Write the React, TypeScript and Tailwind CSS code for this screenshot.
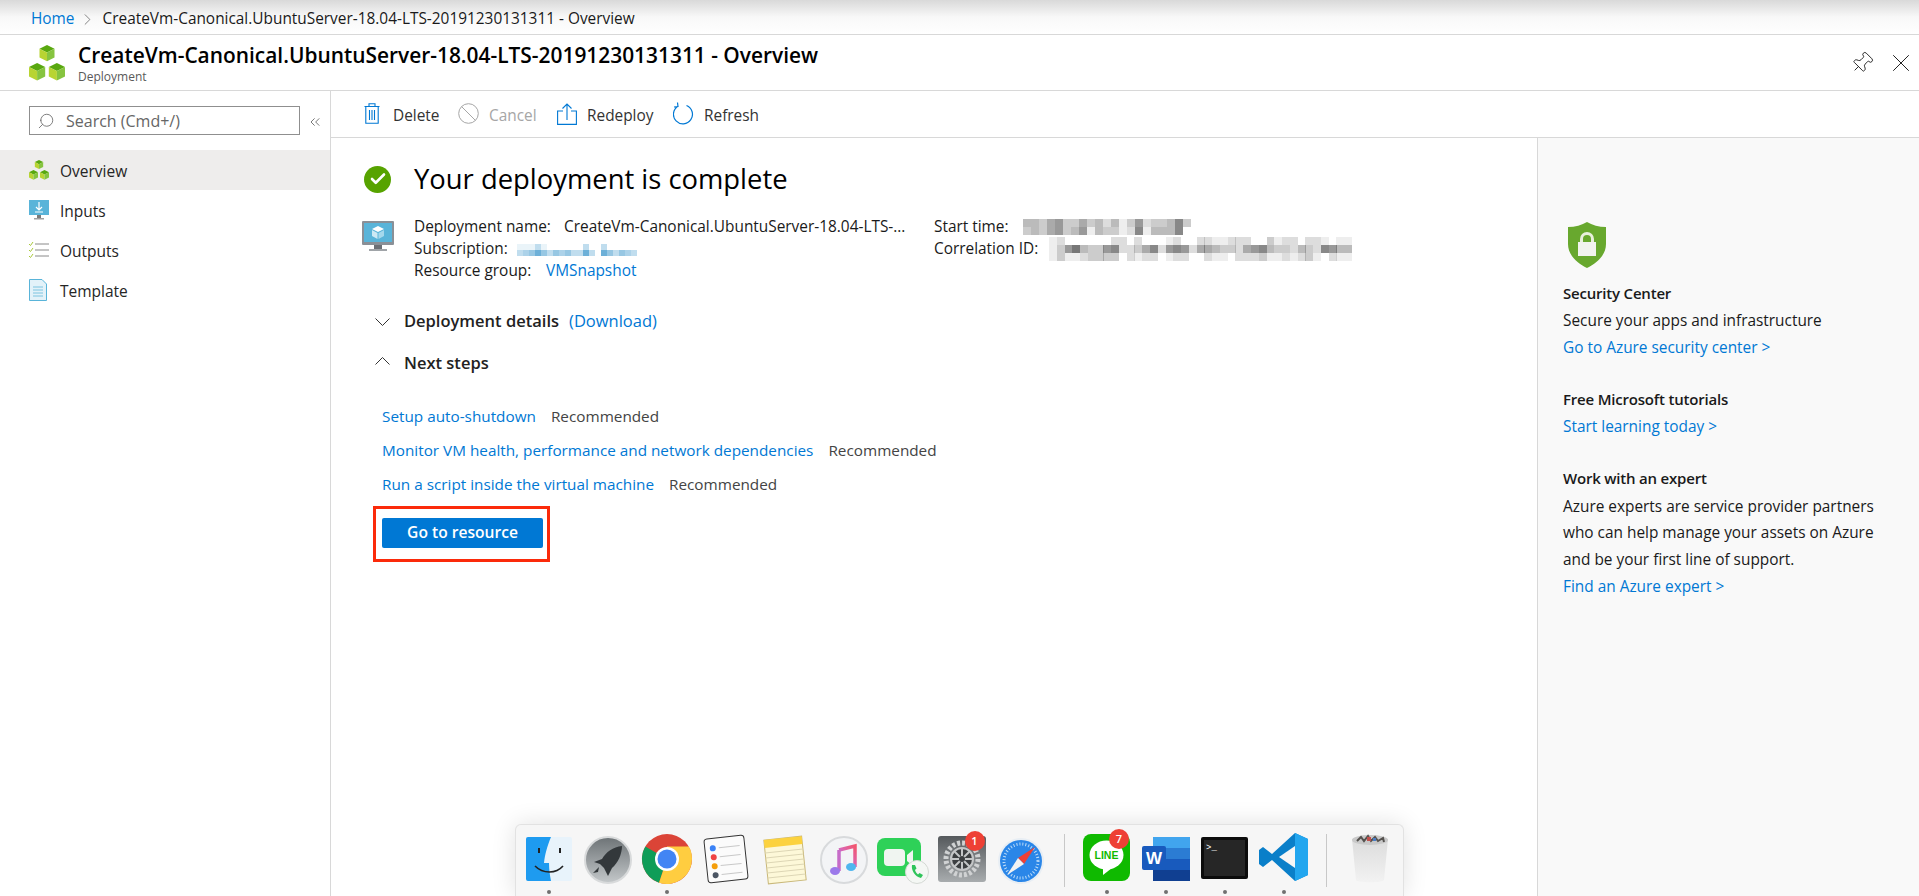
import { Search, ChevronRight, ChevronsLeft, X, Pin, Check } from "lucide-react";

const blue = "text-[#0078d4]";

// one green cube of the deployment icon
const Cube = ({ x, y, s }: { x: number; y: number; s: number }) => (
  <g transform={`translate(${x} ${y}) scale(${s})`}>
    <polygon points="0,3 6,0 12,3 6,6" fill="#59a80f" />
    <polygon points="0,3 6,6 6,13 0,10" fill="#b8d432" />
    <polygon points="12,3 6,6 6,13 12,10" fill="#86c440" />
  </g>
);

const Cubes = ({ className }: { className: string }) => (
  <svg viewBox="0 0 36 36" className={className}>
    <Cube x={10.5} y={0} s={1.25} />
    <Cube x={0} y={18} s={1.35} />
    <Cube x={19.8} y={18} s={1.35} />
  </svg>
);

const Monitor = ({ className }: { className: string }) => (
  <svg viewBox="0 0 32 30" className={className}>
    <rect x="0" y="0" width="32" height="24" rx="1" fill="#8a9097" />
    <rect x="2" y="2" width="28" height="19" fill="#59b4d9" />
    <rect x="12" y="24" width="8" height="4" fill="#6b7076" />
    <rect x="7" y="28" width="18" height="2" fill="#a0a4a8" />
    <polygon points="16,5 22,8 16,11 10,8" fill="#ffffff" />
    <polygon points="10,9 15.5,12 15.5,18 10,15" fill="#cde9f4" />
    <polygon points="22,9 16.5,12 16.5,18 22,15" fill="#a5d8ec" />
  </svg>
);

// pixelated (censored) values in the summary
const Blur = ({ rows, rgb, className }: { rows: number[][]; rgb: string; className: string }) => (
  <svg viewBox={`0 0 ${rows[0].length} ${rows.length}`} shapeRendering="crispEdges" className={className}>
    {rows.map((row, y) =>
      row.map((v, x) => <rect key={x} x={x} y={y} width="1.02" height="1.02" fill={rgb} opacity={v / 10} />)
    )}
  </svg>
);

const startRows = [
  [4, 4, 3, 5, 6, 3, 3, 5, 3, 4, 2, 4, 1, 3, 6, 2, 3, 3, 4, 7, 3],
  [3, 4, 3, 5, 6, 3, 4, 6, 1, 4, 3, 3, 1, 2, 7, 1, 4, 4, 4, 7, 0],
];
const corrRows = [
  [1, 2, 0, 0, 0, 0, 0, 0, 2, 2, 0, 2, 0, 0, 0, 1, 2, 0, 0, 2, 2, 1, 1, 2, 2, 2, 0, 0, 3, 1, 2, 2, 0, 2, 2, 1, 0, 1, 1],
  [1, 3, 6, 8, 4, 3, 3, 6, 7, 2, 2, 3, 5, 7, 2, 6, 7, 6, 2, 5, 5, 4, 3, 3, 2, 5, 6, 7, 4, 3, 3, 2, 4, 3, 2, 7, 6, 4, 4],
  [1, 3, 1, 1, 2, 3, 3, 3, 3, 0, 2, 1, 2, 2, 0, 1, 2, 2, 0, 0, 2, 1, 1, 0, 2, 2, 2, 3, 1, 1, 2, 1, 2, 3, 1, 0, 2, 1, 1],
];
const subRows = [
  [1, 1, 1, 3, 1, 0, 0, 0, 0, 0, 0, 3, 0, 0, 3, 0, 0, 0, 0, 0],
  [3, 4, 5, 7, 5, 3, 5, 4, 5, 3, 3, 7, 3, 0, 7, 5, 3, 5, 4, 3],
];

const Dot = () => <span className="absolute bottom-[2px] left-1/2 -ml-[2px] h-[4px] w-[4px] rounded-full bg-[#707070]" />;

const Badge = ({ n }: { n: number }) => (
  <span className="absolute -top-[5px] right-[1px] flex h-[20px] w-[20px] items-center justify-center rounded-full bg-[#ee4035] text-[11px] font-semibold text-white">
    {n}
  </span>
);

const DockItem = ({ dot, children }: { dot?: boolean; children: React.ReactNode }) => (
  <div className="relative flex h-full w-[59px] items-start justify-center pt-[9px]">
    {children}
    {dot && <Dot />}
  </div>
);

const Dock = () => (
  <div className="absolute bottom-0 left-[515px] flex h-[72px] w-[889px] rounded-t-[6px] border border-b-0 border-[#e2e2e2] bg-[#f6f6f6] pl-[3px] shadow-[0_0_24px_rgba(0,0,0,0.12)]">
    <DockItem dot>
      <svg viewBox="0 0 46 44" className="mt-[3px] h-[44px] w-[46px]">
        <rect width="46" height="44" rx="2" fill="#e8f3fb" />
        <path d="M2 0H25C21 10 19 17 18 26H23C23 33 24 39 25 44H2a2 2 0 0 1-2-2V2a2 2 0 0 1 2-2Z" fill="#1e9bf0" />
        <rect x="12" y="11" width="2" height="5" fill="#222" />
        <rect x="33" y="11" width="2" height="5" fill="#222" />
        <path d="M9 29C17 37 30 37 37 29" fill="none" stroke="#222" strokeWidth="1.6" />
      </svg>
    </DockItem>
    <DockItem>
      <svg viewBox="0 0 48 48" className="mt-[2px] h-[48px] w-[48px]">
        <defs>
          <linearGradient id="rocketBg" x1="0" y1="0" x2="0" y2="1">
            <stop offset="0" stopColor="#6d7376" />
            <stop offset="1" stopColor="#c4c8ca" />
          </linearGradient>
        </defs>
        <circle cx="24" cy="24" r="23" fill="url(#rocketBg)" stroke="#d8dadb" strokeWidth="2" />
        <path d="M38 10C29 11 22 16 18 23L10 26L16 28L20 32L24 40L28 32C34 27 38 18 38 10Z" fill="#33383b" />
        <path d="M15 31L9 37L14 36Z" fill="#33383b" />
      </svg>
    </DockItem>
    <DockItem dot>
      <svg viewBox="0 0 52 52" className="-mt-[1px] h-[52px] w-[52px]">
        <circle cx="26" cy="26" r="25" fill="#db4437" />
        <path d="M26 26L4.3 13.5A25 25 0 0 0 18 49.7Z" fill="#0f9d58" />
        <path d="M26 26L18 49.7A25 25 0 0 0 51 26C51 21 50 17 47.7 13.5H26Z" fill="#ffcd40" />
        <circle cx="26" cy="26" r="12" fill="#ffffff" />
        <circle cx="26" cy="26" r="9.5" fill="#4285f4" />
      </svg>
    </DockItem>
    <DockItem>
      <svg viewBox="0 0 46 50" className="h-[50px] w-[46px]">
        <g transform="rotate(-6 23 25)">
          <rect x="3" y="3" width="40" height="44" rx="3" fill="#fbfbfb" stroke="#333" strokeWidth="1" />
          <circle cx="11" cy="13" r="3" fill="#3b82f6" />
          <circle cx="11" cy="22" r="3" fill="#ef4444" />
          <circle cx="11" cy="31" r="3" fill="#f59e0b" />
          <circle cx="11" cy="40" r="3" fill="#4b5563" />
          <path d="M17 13H38M17 22H38M17 31H38M17 40H38" stroke="#c8c8c8" strokeWidth="1" />
        </g>
      </svg>
    </DockItem>
    <DockItem>
      <svg viewBox="0 0 46 52" className="h-[52px] w-[46px]">
        <g transform="rotate(-6 23 26)">
          <rect x="4" y="4" width="38" height="44" fill="#fdf8d8" stroke="#c9b87a" strokeWidth="1" />
          <rect x="4" y="4" width="38" height="8" fill="#fcd23e" />
          <path d="M4 17H42M4 22H42M4 27H42M4 32H42M4 37H42M4 42H42" stroke="#ddd6b5" strokeWidth="1" />
        </g>
      </svg>
    </DockItem>
    <DockItem>
      <svg viewBox="0 0 48 48" className="mt-[2px] h-[48px] w-[48px]">
        <defs>
          <linearGradient id="noteGrad" x1="0" y1="1" x2="1" y2="0">
            <stop offset="0" stopColor="#8f7cf0" />
            <stop offset="0.5" stopColor="#d966b5" />
            <stop offset="1" stopColor="#f2566f" />
          </linearGradient>
        </defs>
        <circle cx="24" cy="24" r="23" fill="#f3f4f6" stroke="#d8dadc" strokeWidth="2" />
        <path d="M19 14L35 10V31" fill="none" stroke="url(#noteGrad)" strokeWidth="3.5" />
        <path d="M19 14V35" stroke="#c66bc8" strokeWidth="3.5" />
        <ellipse cx="15" cy="35" rx="5" ry="4" fill="#9b79ea" />
        <ellipse cx="31" cy="31" rx="5" ry="4" fill="#4fb6ee" />
      </svg>
    </DockItem>
    <DockItem>
      <svg viewBox="0 0 52 46" className="mt-[4px] h-[46px] w-[52px]">
        <rect x="0" y="0" width="44" height="38" rx="8" fill="#2ed158" />
        <rect x="7" y="11" width="21" height="17" rx="4" fill="#f0f5f1" />
        <path d="M30 17L36 12V28L30 23Z" fill="#f0f5f1" />
        <circle cx="40" cy="34" r="11.5" fill="#f4f7f4" stroke="#d4d8d4" strokeWidth="1" />
        <path d="M35 27C34 32 38 39 44 40L46 37L42.500 35L41 36.500C39.500 35.500 38.500 33.500 38 32L39.500 30.500L38 27Z" fill="#2ec45a" />
      </svg>
    </DockItem>
    <DockItem>
      <div className="relative mt-[2px]">
        <svg viewBox="0 0 48 46" className="h-[46px] w-[48px]">
          <defs>
            <linearGradient id="gearBg" x1="0" y1="0" x2="0" y2="1">
              <stop offset="0" stopColor="#55595c" />
              <stop offset="1" stopColor="#a8acae" />
            </linearGradient>
          </defs>
          <rect width="48" height="46" rx="3" fill="url(#gearBg)" />
          <circle cx="24" cy="23" r="16" fill="none" stroke="#d0d2d3" strokeWidth="5" strokeDasharray="3 2" />
          <circle cx="24" cy="23" r="11" fill="#3c3f41" stroke="#c4c6c7" strokeWidth="2" />
          <path d="M24 12V34M13 23H35M16 15L32 31M32 15L16 31" stroke="#c4c6c7" strokeWidth="2" />
          <circle cx="24" cy="23" r="3" fill="#3c3f41" />
        </svg>
        <Badge n={1} />
      </div>
    </DockItem>
    <DockItem>
      <svg viewBox="0 0 48 48" className="mt-[3px] h-[48px] w-[48px]">
        <circle cx="24" cy="24" r="23" fill="#e8eef4" />
        <circle cx="24" cy="24" r="21" fill="#2a86e8" />
        <circle cx="24" cy="24" r="17" fill="none" stroke="#bcdcf8" strokeWidth="3" strokeDasharray="1 2" />
        <polygon points="38,10 21,21 27,27" fill="#ee4035" />
        <polygon points="10,38 21,21 27,27" fill="#f2f2f2" />
      </svg>
    </DockItem>
    <div className="ml-[14px] mr-[12px] mt-[9px] h-[53px] w-px bg-[#c8c8c8]" />
    <DockItem dot>
      <div className="relative">
        <svg viewBox="0 0 47 47" className="h-[47px] w-[47px]">
          <rect width="47" height="47" rx="8" fill="#0fba00" />
          <ellipse cx="23.500" cy="21" rx="17" ry="14.500" fill="#ffffff" />
          <path d="M20 34L20 41L29 34Z" fill="#ffffff" />
          <text x="23.500" y="25" textAnchor="middle" fontSize="10.500" fontWeight="700" fill="#0fba00" fontFamily="'Liberation Sans', sans-serif">LINE</text>
        </svg>
        <Badge n={7} />
      </div>
    </DockItem>
    <DockItem dot>
      <svg viewBox="0 0 48 44" className="mt-[3px] h-[44px] w-[48px]">
        <rect x="11" y="0" width="37" height="44" rx="2" fill="#2b7cd3" />
        <rect x="11" y="0" width="37" height="11" fill="#41a5ee" />
        <rect x="11" y="22" width="37" height="11" fill="#185abd" />
        <rect x="11" y="33" width="37" height="11" fill="#103f91" />
        <rect x="0" y="9" width="24" height="24" rx="2" fill="#185abd" />
        <text x="12" y="27" textAnchor="middle" fontSize="17" fontWeight="700" fill="#ffffff" fontFamily="'Liberation Sans', sans-serif">W</text>
      </svg>
    </DockItem>
    <DockItem dot>
      <svg viewBox="0 0 47 42" className="mt-[3px] h-[42px] w-[47px]">
        <rect width="47" height="42" rx="2" fill="#0c0c0c" />
        <rect x="3" y="3" width="41" height="36" fill="#262626" />
        <text x="5" y="13" fontSize="9" fill="#ffffff" fontFamily="'Liberation Mono', monospace">&gt;_</text>
      </svg>
    </DockItem>
    <DockItem dot>
      <svg viewBox="0 0 49 48" className="mt-[-1px] h-[48px] w-[49px]">
        <path d="M36 0L49 6V42L36 48L13 27L4 34L0 31V17L4 14L13 21Z" fill="#0a7fc9" />
        <path d="M36 0L49 6V42L36 48Z" fill="#22a6ef" />
        <path d="M36 13L20 24L36 35Z" fill="#f6f6f6" />
      </svg>
    </DockItem>
    <div className="ml-[13px] mr-[13px] mt-[9px] h-[53px] w-px bg-[#c8c8c8]" />
    <DockItem>
      <svg viewBox="0 0 38 50" className="h-[50px] w-[38px]">
        <defs>
          <linearGradient id="binGrad" x1="0" y1="0" x2="0" y2="1">
            <stop offset="0" stopColor="#dcdcdc" />
            <stop offset="1" stopColor="#f2f2f2" />
          </linearGradient>
        </defs>
        <path d="M1 5L5 46C5 49 33 49 33 46L37 5Z" fill="url(#binGrad)" />
        <ellipse cx="19" cy="6" rx="18" ry="5" fill="#c9c9c9" />
        <path d="M6 7L10 3L13 7L17 2L20 7L24 3L27 7L32 4L33 8" fill="none" stroke="#55524f" strokeWidth="2" />
        <rect x="16" y="3" width="4" height="4" fill="#c0504d" />
        <rect x="22" y="4" width="3" height="3" fill="#4a7dc4" />
      </svg>
    </DockItem>
  </div>
);

const NavItem = ({ label, active, icon }: { label: string; active?: boolean; icon: React.ReactNode }) => (
  <div className={`flex h-[40px] items-center ${active ? "bg-[#eeedec]" : ""}`}>
    <div className="ml-[29px] flex w-[31px] shrink-0 items-center">{icon}</div>
    <span className="pt-[3px] text-[15.5px] text-[#252525]">{label}</span>
  </div>
);

const ToolItem = ({ icon, label, width, muted }: { icon: React.ReactNode; label: string; width: string; muted?: boolean }) => (
  <div className={`flex items-center ${width}`}>
    {icon}
    <span className={`pt-[4px] text-[15.4px] ${muted ? "text-[#a6a6a6]" : "text-[#333333]"}`}>{label}</span>
  </div>
);

const NextStep = ({ link }: { link: string }) => (
  <div className="flex h-[34px] items-center gap-[15px] text-[15.3px]">
    <a className={blue}>{link}</a>
    <span className="text-[#444444]">Recommended</span>
  </div>
);

const Chevron = ({ up }: { up?: boolean }) => (
  <svg viewBox="0 0 15 8" className={`mr-[14px] h-[8px] w-[15px] ${up ? "-mt-[4px] rotate-180" : "mt-[1px]"}`}>
    <path d="M0.5 0.5L7.5 7.5L14.5 0.5" fill="none" stroke="#333333" strokeWidth="1" />
  </svg>
);

export default function App() {
  return (
    <div className="relative h-[896px] w-full overflow-hidden bg-white font-['Open_Sans',_sans-serif] text-[#1a1a1a]">
      {/* breadcrumb */}
      <div className="flex h-[35px] items-center border-b border-[#d8d8d8] bg-gradient-to-b from-[#d9d9d9] via-[#f8f8f8] via-50% to-white pl-[31px] pt-[4px] text-[15.4px]">
        <a className={blue}>Home</a>
        <ChevronRight size={19} strokeWidth={1} className="ml-[3px] mr-[4px] text-[#666666]" />
        <span className="ml-[2px]">CreateVm-Canonical.UbuntuServer-18.04-LTS-20191230131311 - Overview</span>
      </div>

      {/* blade header */}
      <div className="flex h-[56px] items-center border-b border-[#d8d8d8] pl-[29px] pr-[3px]">
        <Cubes className="h-[36px] w-[36px] shrink-0" />
        <div className="ml-[13px] flex flex-col">
          <h1 className="text-[20.9px] font-semibold leading-[28px] text-black">CreateVm-Canonical.UbuntuServer-18.04-LTS-20191230131311 - Overview</h1>
          <span className="text-[12px] leading-[15px] text-[#595959]">Deployment</span>
        </div>
        <div className="ml-auto flex items-center gap-[12px] text-[#222222]">
          <Pin size={24} strokeWidth={0.9} className="rotate-45" />
          <X size={30} strokeWidth={0.8} />
        </div>
      </div>

      <div className="flex h-[805px]">
        {/* left menu */}
        <aside className="w-[331px] shrink-0 border-r border-[#d8d8d8]">
          <div className="flex h-[59px] items-center pl-[29px]">
            <div className="flex h-[29px] w-[271px] items-center border border-[#8f8f8f] pl-[7px] text-[16px] text-[#666666]">
              <Search size={18} strokeWidth={1.1} className="mr-[11px] -scale-x-100" />
              Search (Cmd+/)
            </div>
            <ChevronsLeft size={16} strokeWidth={1} className="ml-[7px] mt-[3px] text-[#333333]" />
          </div>
          <NavItem label="Overview" active icon={<Cubes className="h-[20px] w-[20px]" />} />
          <NavItem
            label="Inputs"
            icon={
              <svg viewBox="0 0 20 20" className="h-[20px] w-[20px]">
                <rect x="0" y="0" width="20" height="15" fill="#59b4d9" />
                <path d="M10 2V10M7 7L10 10L13 7M6 12H14" fill="none" stroke="#ffffff" strokeWidth="1.2" />
                <rect x="8" y="15" width="4" height="3" fill="#7a7a7a" />
                <rect x="5" y="18" width="10" height="1.500" fill="#a0a0a0" />
              </svg>
            }
          />
          <NavItem
            label="Outputs"
            icon={
              <svg viewBox="0 0 20 20" className="h-[20px] w-[20px]">
                <path d="M6 4H20M6 10H20M6 16H20" stroke="#8a8a8a" strokeWidth="1" />
                <path d="M0 4L1.500 5.500L4 2M0 10L1.500 11.500L4 8M0 16L1.500 17.500L4 14" fill="none" stroke="#a8c83a" strokeWidth="1" />
              </svg>
            }
          />
          <NavItem
            label="Template"
            icon={
              <svg viewBox="0 0 18 22" className="h-[22px] w-[18px]">
                <path d="M0.500 0.500H13L17.500 5V21.500H0.500Z" fill="#e3f2f9" stroke="#59b4d9" />
                <path d="M4 8H14M4 11H14M4 14H14M4 17H14" stroke="#7cc4e0" />
              </svg>
            }
          />
        </aside>

        <div className="flex min-w-0 flex-1 flex-col">
          {/* command bar */}
          <div className="flex h-[47px] shrink-0 items-center border-b border-[#d8d8d8] pl-[33px]">
            <ToolItem
              width="w-[94px]"
              label="Delete"
              icon={
                <svg viewBox="0 0 16 21" className="mr-[13px] h-[21px] w-[16px]">
                  <path d="M0.5 3.500H15.500M5 3.500V0.700H11V3.500M1.800 3.500V20.300H14.200V3.500M5.500 7V17M8 7V17M10.500 7V17" fill="none" stroke="#0078d4" strokeWidth="1.1" />
                </svg>
              }
            />
            <ToolItem
              width="w-[99px]"
              label="Cancel"
              muted
              icon={
                <svg viewBox="0 0 21 21" className="mr-[10px] h-[21px] w-[21px]">
                  <circle cx="10.500" cy="10.500" r="9.800" fill="none" stroke="#a6a6a6" strokeWidth="1" />
                  <path d="M3.500 3.500L17.500 17.500" stroke="#a6a6a6" strokeWidth="1" />
                </svg>
              }
            />
            <ToolItem
              width="w-[116px]"
              label="Redeploy"
              icon={
                <svg viewBox="0 0 20 22" className="mr-[10px] h-[22px] w-[20px]">
                  <path d="M6 8H0.600V21.400H19.400V8H14M10 17V1M5.500 5.500L10 1L14.500 5.500" fill="none" stroke="#0078d4" strokeWidth="1.1" />
                </svg>
              }
            />
            <ToolItem
              width="w-[90px]"
              label="Refresh"
              icon={
                <svg viewBox="0 0 21 23" className="mr-[10px] h-[23px] w-[21px]">
                  <path d="M13.500 3.500A9.500 9.500 0 1 1 5 4.200M4.500 0.500L5 4.500L1 5" fill="none" stroke="#0078d4" strokeWidth="1.2" />
                </svg>
              }
            />
          </div>

          <div className="flex min-h-0 flex-1">
            <main className="min-w-0 flex-1 pl-[33px] pt-[27px]">
              <div className="flex h-[28px] items-center">
                <span className="flex h-[27px] w-[27px] items-center justify-center rounded-full bg-[#57a300]">
                  <Check size={18} strokeWidth={3.5} className="text-white" />
                </span>
                <h2 className="ml-[23px] text-[27.4px] leading-[28px] text-black">Your deployment is complete</h2>
              </div>

              {/* summary */}
              <div className="mt-[23px] flex text-[15.4px] leading-[22px]">
                <Monitor className="-ml-[2px] mt-[5px] h-[30px] w-[32px] shrink-0" />
                <div className="ml-[20px] w-[520px] shrink-0">
                  <div className="flex">
                    <span className="w-[150px] shrink-0">Deployment name:</span>
                    <span>CreateVm-Canonical.UbuntuServer-18.04-LTS-...</span>
                  </div>
                  <div className="flex h-[22px] items-center">
                    <span className="w-[103px]">Subscription:</span>
                    <Blur rows={subRows} rgb="#2f8fc8" className="h-[17px] w-[120px]" />
                  </div>
                  <div className="flex">
                    <span className="w-[132px]">Resource group:</span>
                    <a className={blue}>VMSnapshot</a>
                  </div>
                </div>
                <div>
                  <div className="flex h-[22px] items-center">
                    <span className="w-[89px]">Start time:</span>
                    <Blur rows={startRows} rgb="#555555" className="h-[16px] w-[168px]" />
                  </div>
                  <div className="flex h-[22px] items-center">
                    <span className="w-[115px]">Correlation ID:</span>
                    <Blur rows={corrRows} rgb="#555555" className="h-[24px] w-[303px]" />
                  </div>
                </div>
              </div>

              {/* sections */}
              <div className="mt-[25px] flex h-[28px] items-center pl-[11px] text-[16.5px]">
                <Chevron />
                <span className="font-semibold text-[#222222]">Deployment details</span>
                <a className={`ml-[10px] ${blue}`}>(Download)</a>
              </div>
              <div className="mt-[14px] flex h-[28px] items-center pl-[11px] text-[16.5px]">
                <Chevron up />
                <span className="font-semibold text-[#222222]">Next steps</span>
              </div>

              <div className="mt-[22px] pl-[18px]">
                <NextStep link="Setup auto-shutdown" />
                <NextStep link="Monitor VM health, performance and network dependencies" />
                <NextStep link="Run a script inside the virtual machine" />
              </div>
              <div className="ml-[9px] mt-[5px] inline-flex border-[3px] border-[#fb2a0a] pb-[11px] pl-[6px] pr-[4px] pt-[9px]">
                <button className="h-[30px] w-[161px] rounded-[2px] bg-[#0078d4] text-[15.6px] font-semibold text-white">Go to resource</button>
              </div>
            </main>

            {/* right rail */}
            <aside className="w-[382px] shrink-0 border-l border-[#d8d8d8] bg-[#f9f9f9] pl-[25px] pt-[84px] text-[15.4px] leading-[26.6px]">
              <svg viewBox="0 0 38 46" className="ml-[5px] h-[46px] w-[38px]">
                <path d="M19 0C24 3 31 5 38 5V22C38 33 29 41 19 46C9 41 0 33 0 22V5C7 5 14 3 19 0Z" fill="#68a82e" />
                <path d="M12 21V17a7 7 0 0 1 14 0V21H23V17a4 4 0 0 0-8 0V21Z" fill="#e8f0dc" />
                <rect x="10" y="20" width="18" height="14" fill="#f1f3ee" />
              </svg>
              <p className="mt-[12px] text-[15px] font-semibold tracking-[-0.2px] text-[#1a1a1a]">Security Center</p>
              <p className="mt-[1px]">Secure your apps and infrastructure</p>
              <a className={`mt-[1px] block ${blue}`}>Go to Azure security center &gt;</a>
              <p className="mt-[24px] text-[15px] font-semibold tracking-[-0.2px] text-[#1a1a1a]">Free Microsoft tutorials</p>
              <a className={`mt-[2px] block ${blue}`}>Start learning today &gt;</a>
              <p className="mt-[24px] text-[15px] font-semibold tracking-[-0.2px] text-[#1a1a1a]">Work with an expert</p>
              <p className="mt-[2px] w-[320px]">Azure experts are service provider partners who can help manage your assets on Azure and be your first line of support.</p>
              <a className={`mt-[1px] block ${blue}`}>Find an Azure expert &gt;</a>
            </aside>
          </div>
        </div>
      </div>

      <Dock />
    </div>
  );
}
